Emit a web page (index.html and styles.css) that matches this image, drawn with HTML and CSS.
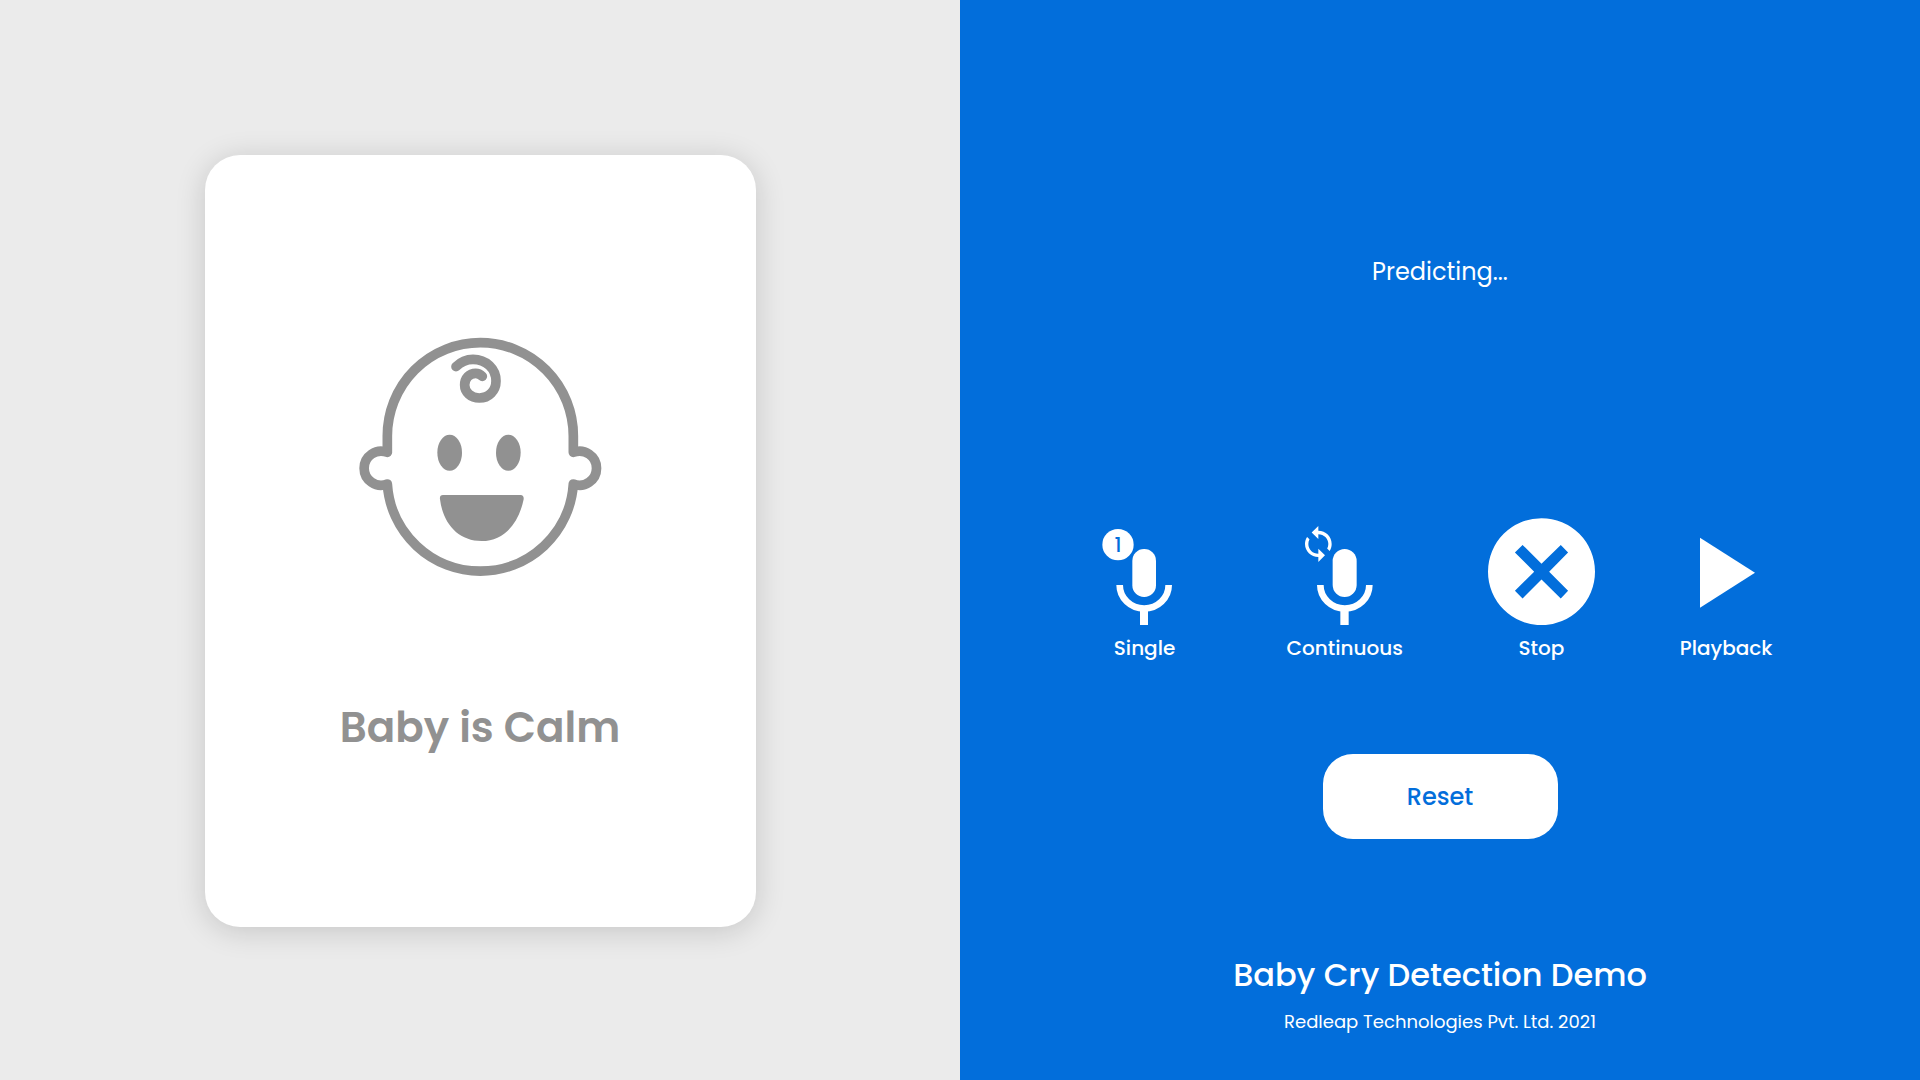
FILE: index.html
```html
<!DOCTYPE html>
<html lang="en">
<head>
<meta charset="utf-8">
<meta name="viewport" content="width=device-width, initial-scale=1">
<title>Baby Cry Detection Demo</title>
<link rel="stylesheet" href="styles.css">
</head>
<body>
<main class="app">
  <section class="result">
    <div class="card">
      <svg class="baby" viewBox="0 0 780 750" aria-hidden="true">
        <g class="baby-line">
          <path d="M112 367V318A279 280 0 0 1 670 318V367A51 51 0 1 1 670 462A279.600 279.600 0 0 1 112 462A51 51 0 1 1 112 367"/>
          <path d="M318 110C334 94 352 88 369 88C408 88 438 116 438 153C438 183 416 204 388 204C362 204 344 186 344 165C344 145 358 130 377 130C386 130 391 133 397 139"/>
        </g>
        <ellipse cx="299" cy="368" rx="37" ry="54"/>
        <ellipse cx="475" cy="368" rx="37" ry="54"/>
        <path d="M279 495H512Q522 495 521 508C506 581 462 633 395 633C325 633 279 581 270 508Q268 495 279 495Z"/>
      </svg>
      <h1 class="verdict">Baby is Calm</h1>
    </div>
  </section>
  <section class="panel">
    <p class="status">Predicting...</p>
    <div class="controls">
      <button class="control" type="button">
        <svg class="icon icon-mic" viewBox="-6 24 342 321" aria-hidden="true">
          <circle cx="84" cy="104" r="47"/>
          <text class="count" x="84" y="126">1</text>
          <rect x="127" y="117" width="71" height="144" rx="35"/>
          <path class="cradle" d="M89 225A73 70 0 0 0 236 225"/>
          <path d="M150 298H174V345H150Z"/>
        </svg>
        <span>Single</span>
      </button>
      <button class="control" type="button">
        <svg class="icon icon-mic" viewBox="591 24 342 321" aria-hidden="true">
          <path transform="translate(622 43) scale(5 4.9)" d="M12 4V1L8 5l4 4V6c3.310 0 6 2.690 6 6 0 1.010-.25 1.970-.7 2.800l1.460 1.460C19.540 15.030 20 13.570 20 12c0-4.420-3.580-8-8-8zm0 14c-3.310 0-6-2.690-6-6 0-1.010.25-1.970.7-2.800L5.240 7.740C4.460 8.970 4 10.430 4 12c0 4.420 3.580 8 8 8v3l4-4-4-4v3z"/>
          <rect x="725" y="117" width="72" height="144" rx="36"/>
          <path class="cradle" d="M688 225A73 70 0 0 0 835 225"/>
          <path d="M748 298H773V345H748Z"/>
        </svg>
        <span>Continuous</span>
      </button>
      <button class="control" type="button">
        <svg class="icon icon-stop" viewBox="54 24 322 322" aria-hidden="true">
          <path fill-rule="evenodd" d="M54 185.500a161 161 0 1 0 322 0a161 161 0 1 0-322 0ZM158 105L215 162L273 105L295 128L238 185.500L295 243L273 266L215 209L158 266L135 243L193 185.500L135 128Z"/>
        </svg>
        <span>Stop</span>
      </button>
      <button class="control" type="button">
        <svg class="icon icon-play" viewBox="630 24 273 321" aria-hidden="true">
          <path d="M687 83L852 188L687 293Z"/>
        </svg>
        <span>Playback</span>
      </button>
    </div>
    <button class="reset" type="button">Reset</button>
    <footer class="credits">
      <h2 class="product">Baby Cry Detection Demo</h2>
      <p class="company">Redleap Technologies Pvt. Ltd. 2021</p>
    </footer>
  </section>
</main>
</body>
</html>
```
FILE: styles.css
```css
* {
  box-sizing: border-box;
}

body,
h1,
h2,
p {
  margin: 0;
}

body,
button {
  font-family: Poppins, Inter, sans-serif;
}

button {
  border: 0;
  padding: 0;
  cursor: pointer;
}

.app {
  display: grid;
  grid-template-columns: 1fr 1fr;
  min-height: 100vh;
}

.result {
  display: flex;
  align-items: center;
  justify-content: center;
  padding-top: 2px;
  background: #ebebeb;
}

.card {
  display: flex;
  flex-direction: column;
  align-items: center;
  gap: 116px;
  width: 100%;
  max-width: 551px;
  padding: 175px 24px 167px;
  border-radius: 35px;
  background: #fff;
  box-shadow: 0 4px 30px rgba(0, 0, 0, 0.16);
}

.baby {
  width: 260px;
  height: 250px;
  fill: #919191;
}

.baby-line {
  fill: none;
  stroke: #919191;
  stroke-width: 29;
  stroke-linecap: round;
  stroke-linejoin: round;
}

.verdict {
  font-size: 42px;
  font-weight: 600;
  line-height: 64px;
  color: #919191;
}

.panel {
  display: flex;
  flex-direction: column;
  align-items: center;
  padding: 254px 24px 44px;
  background: #026edb;
  color: #fff;
}

.status {
  font-size: 24px;
  line-height: 36px;
}

.controls {
  display: flex;
  gap: 85px;
  margin-top: 228px;
  padding-right: 20px;
}

.control {
  display: flex;
  flex-direction: column;
  align-items: center;
  gap: 8px;
  background: none;
  color: #fff;
  font-size: 20px;
  font-weight: 500;
  line-height: 30px;
}

.icon {
  height: 107px;
  fill: #fff;
}

.icon-mic {
  width: 114px;
}

.icon-stop {
  width: 107px;
}

.icon-play {
  width: 91px;
}

.cradle {
  fill: none;
  stroke: #fff;
  stroke-width: 20;
}

.count {
  fill: #026edb;
  font-size: 60px;
  font-weight: 500;
  text-anchor: middle;
}

.reset {
  width: 235px;
  height: 85px;
  margin-top: 91px;
  border-radius: 30px;
  background: #fff;
  color: #026edb;
  font-size: 24px;
  font-weight: 500;
}

.credits {
  display: flex;
  flex-direction: column;
  align-items: center;
  gap: 9px;
  margin-top: auto;
  text-align: center;
}

.product {
  font-size: 32px;
  font-weight: 500;
  line-height: 48px;
}

.company {
  font-size: 18px;
  line-height: 28px;
}
```
